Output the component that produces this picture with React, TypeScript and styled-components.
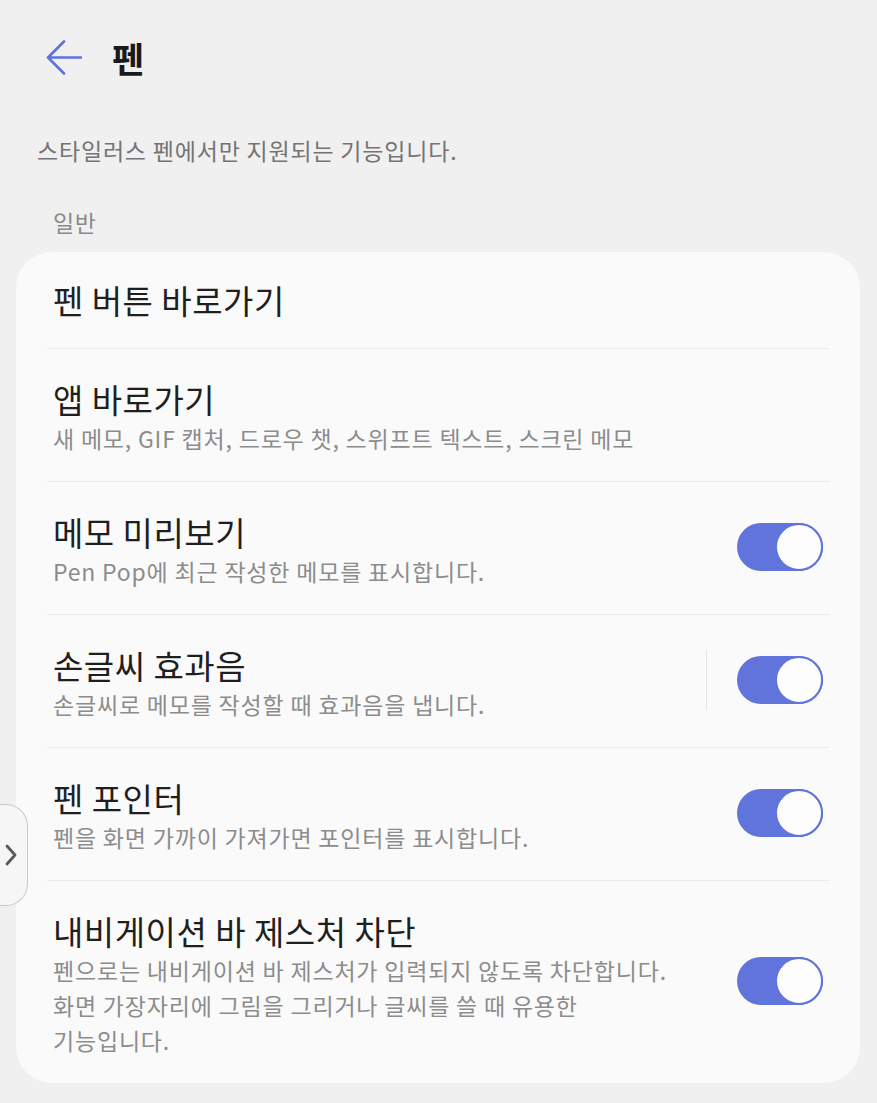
import styled, { createGlobalStyle } from "styled-components";

const GlobalStyle = createGlobalStyle`
  html, body {
    margin: 0;
    padding: 0;
    background: #f0f0f0;
  }
  body {
    font-family: "Noto Sans CJK KR", "Noto Sans", sans-serif;
    color: #1f1f1f;
  }
`;

type Item = {
  title: string;
  sub?: string;
  toggle?: boolean;
  split?: boolean;
};

const items: Item[] = [
  { title: "펜 버튼 바로가기" },
  {
    title: "앱 바로가기",
    sub: "새 메모, GIF 캡처, 드로우 챗, 스위프트 텍스트, 스크린 메모",
  },
  {
    title: "메모 미리보기",
    sub: "Pen Pop에 최근 작성한 메모를 표시합니다.",
    toggle: true,
  },
  {
    title: "손글씨 효과음",
    sub: "손글씨로 메모를 작성할 때 효과음을 냅니다.",
    toggle: true,
    split: true,
  },
  {
    title: "펜 포인터",
    sub: "펜을 화면 가까이 가져가면 포인터를 표시합니다.",
    toggle: true,
  },
  {
    title: "내비게이션 바 제스처 차단",
    sub: "펜으로는 내비게이션 바 제스처가 입력되지 않도록 차단합니다.\n화면 가장자리에 그림을 그리거나 글씨를 쓸 때 유용한\n기능입니다.",
    toggle: true,
  },
];

const App = () => {
  return (
    <Page>
      <GlobalStyle />
      <Header>
        <BackButton aria-label="뒤로">
          <svg width="36" height="36" viewBox="0 0 36 36" fill="none">
            <path
              d="M35 17.5H3M18 1.5L2 17.5L18 33.5"
              stroke="#5d72dc"
              strokeWidth="2.6"
              strokeLinecap="round"
              strokeLinejoin="round"
            />
          </svg>
        </BackButton>
        <Title>펜</Title>
      </Header>

      <Notice>스타일러스 펜에서만 지원되는 기능입니다.</Notice>
      <SectionLabel>일반</SectionLabel>

      <Card>
        {items.map((item, i) => (
          <Row key={i} first={i === 0} single={!item.sub}>
            <TextBlock>
              <RowTitle>{item.title}</RowTitle>
              {item.sub && <RowSub>{item.sub}</RowSub>}
            </TextBlock>
            {item.split && <VDivider />}
            {item.toggle && (
              <Switch>
                <Knob />
              </Switch>
            )}
          </Row>
        ))}
      </Card>

      <EdgeHandle>
        <svg width="14" height="26" viewBox="0 0 14 26" fill="none">
          <path
            d="M3 4L11 13L3 22"
            stroke="#5a5a5a"
            strokeWidth="2.8"
            strokeLinecap="round"
            strokeLinejoin="round"
          />
        </svg>
      </EdgeHandle>
    </Page>
  );
};

const Page = styled.div`
  position: relative;
  min-height: 1103px;
  box-sizing: border-box;
  padding-bottom: 21px;
`;

const Header = styled.div`
  display: flex;
  align-items: center;
  height: 44px;
  padding: 36px 0 0 46px;
`;

const BackButton = styled.div`
  display: flex;
  align-items: center;
  width: 36px;
  height: 36px;
`;

const Title = styled.h1`
  margin: 0 0 0 30px;
  font-size: 35px;
  font-weight: 700;
  line-height: 44px;
  color: #1a1a1a;
`;

const Notice = styled.p`
  margin: 54px 0 0 37px;
  font-size: 23px;
  letter-spacing: 0.8px;
  line-height: 32px;
  color: #747474;
`;

const SectionLabel = styled.div`
  margin: 41px 0 0 53px;
  font-size: 23px;
  letter-spacing: 0.5px;
  line-height: 30px;
  color: #8a8a8a;
`;

const Card = styled.div`
  margin: 15px 17px 0 16px;
  padding: 0 30px 0 31px;
  background: #fafafa;
  border-radius: 36px;
`;

const Row = styled.div<{ first?: boolean; single?: boolean }>`
  display: flex;
  align-items: center;
  padding: ${(p) => (p.single ? "28px 7px 28px 6px" : "30px 7px 25px 6px")};
  border-top: ${(p) => (p.first ? "none" : "1px solid #ebebeb")};
`;

const TextBlock = styled.div`
  flex: 1;
  min-width: 0;
`;

const RowTitle = styled.div`
  font-size: 33px;
  letter-spacing: 0.5px;
  line-height: 40px;
  color: #1f1f1f;
`;

const RowSub = styled.div`
  margin-top: 2px;
  font-size: 23px;
  letter-spacing: 0.8px;
  line-height: 35px;
  color: #8c8c8c;
  white-space: pre-line;
`;

const VDivider = styled.div`
  width: 1px;
  height: 60px;
  margin: 0 30px 7px 0;
  background: #e3e3e3;
`;

const Switch = styled.div`
  position: relative;
  flex: none;
  width: 86px;
  height: 48px;
  margin-bottom: 7px;
  border-radius: 24px;
  background: #6074dc;
`;

const Knob = styled.div`
  position: absolute;
  top: 0;
  right: 0;
  width: 48px;
  height: 48px;
  box-sizing: border-box;
  border-radius: 50%;
  border: 2px solid #6074dc;
  background: #fdfdfd;
`;

const EdgeHandle = styled.div`
  position: absolute;
  left: 0;
  top: 804px;
  display: flex;
  align-items: center;
  justify-content: flex-start;
  width: 28px;
  height: 102px;
  box-sizing: border-box;
  padding-left: 4px;
  border: 1.5px solid #c9c9c9;
  border-left: none;
  border-radius: 0 22px 22px 0;
  background: #f6f6f6;
`;

export default App;
